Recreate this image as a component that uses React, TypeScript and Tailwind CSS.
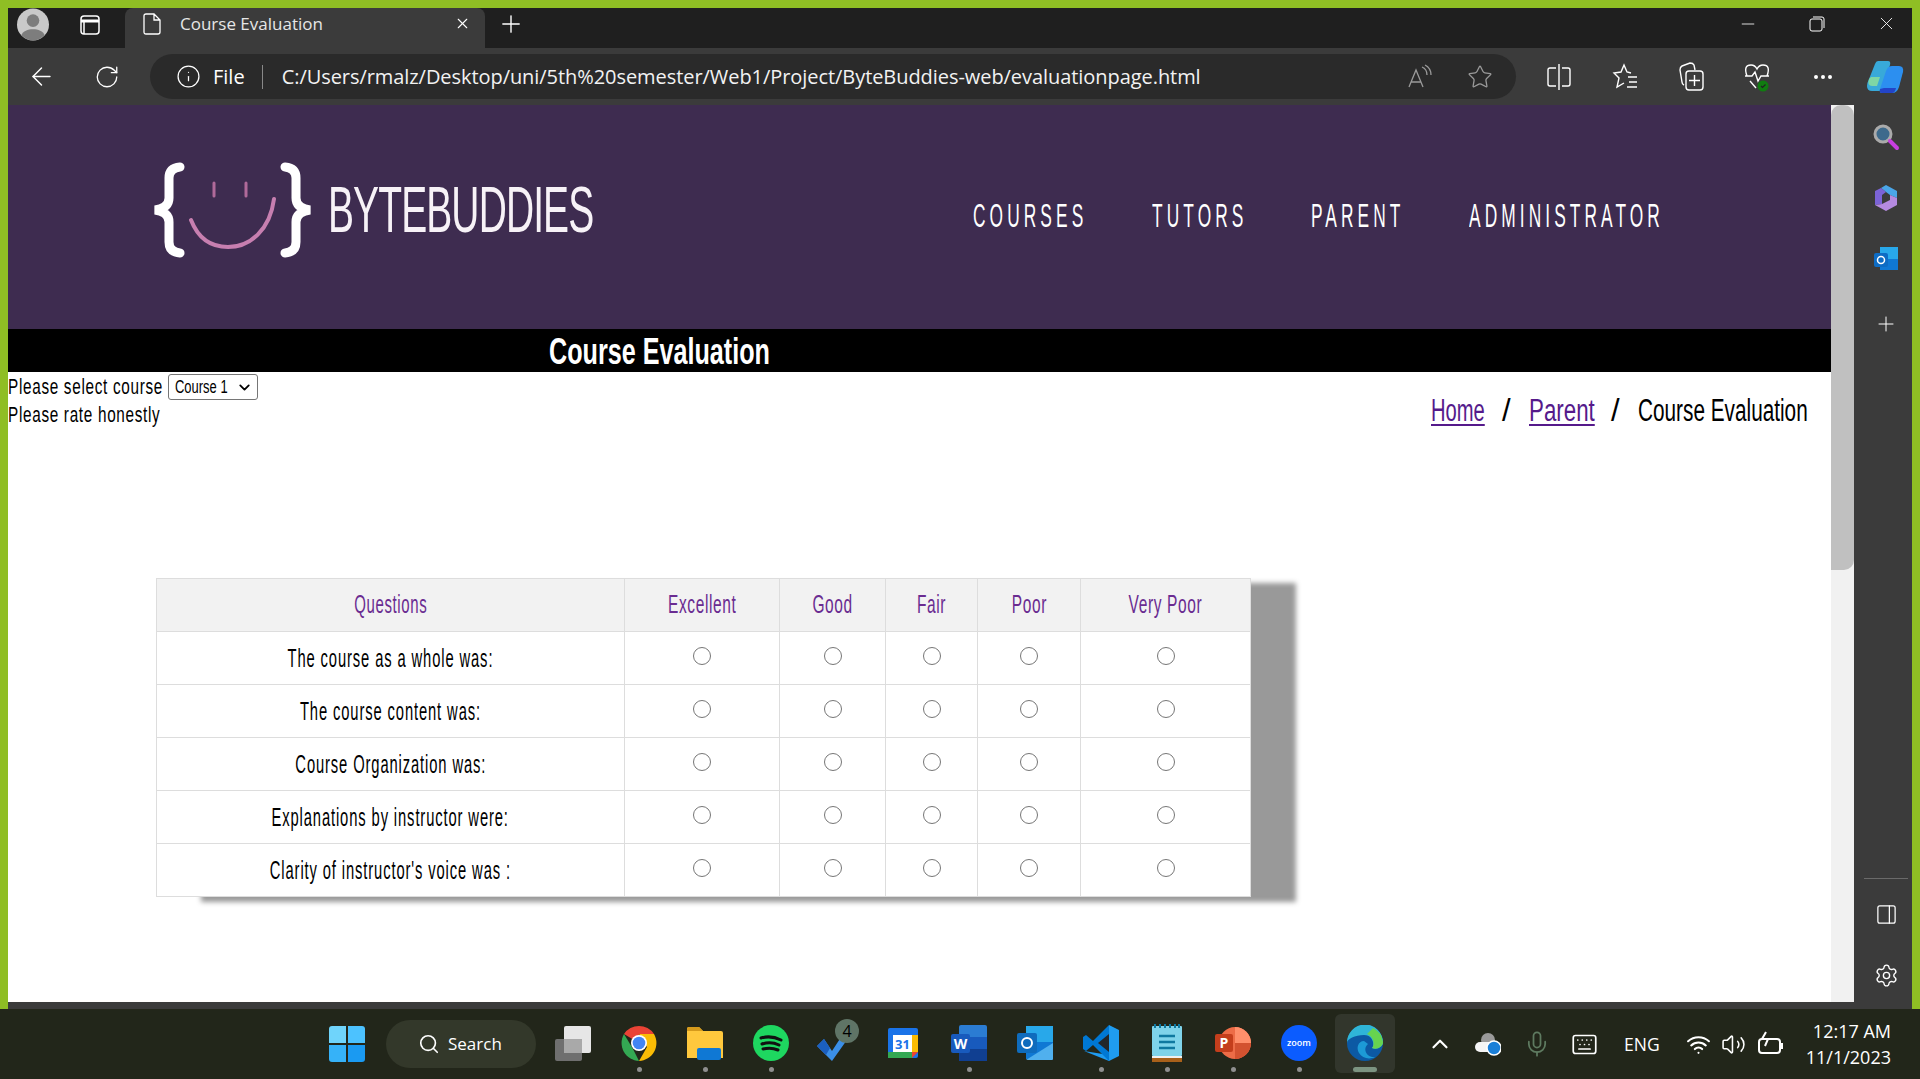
import { ArrowLeft, RotateCw, Info, Star, Plus, Minus, X, MoreHorizontal, Search, ChevronUp, ChevronDown, Mic, Keyboard, Wifi, Volume2, Settings, PanelRight } from "lucide-react";

const questions = [
  "The course as a whole was:",
  "The course content was:",
  "Course Organization was:",
  "Explanations by instructor were:",
  "Clarity of instructor's voice was :",
];
const ratings = ["Excellent", "Good", "Fair", "Poor", "Very Poor"];

// the page's condensed face isn't installed, so the text is squeezed sideways
function Sq({ box, inner, children }: { box: string; inner: string; children: React.ReactNode }) {
  return (
    <span className={"inline-block whitespace-nowrap " + box}>
      <span className={"inline-block origin-left " + inner}>{children}</span>
    </span>
  );
}

function Logo() {
  return (
    <svg className="shrink-0" width="165" height="100" viewBox="0 0 165 100" fill="none" strokeLinecap="round">
      <path d="M30 7Q19 8 19 18V38Q19 48 5 50Q19 52 19 62V82Q19 92 30 93" stroke="#fff" strokeWidth="9" />
      <path d="M135 7Q146 8 146 18V38Q146 48 160 50Q146 52 146 62V82Q146 92 135 93" stroke="#fff" strokeWidth="9" />
      <path d="M64 23V36M96 23V36" stroke="#b06a9a" strokeWidth="3" />
      <path d="M41 60C48 78 60 87 78 87C100 87 120 70 124 39" stroke="#c77fb0" strokeWidth="4" />
    </svg>
  );
}

function TitleBar() {
  return (
    <div className="flex h-[40px] items-start bg-[#1f1f1f] text-white [font-family:'Open_Sans',sans-serif]">
      <div className="flex h-[33px] w-[117px] items-center pl-[8px]">
        <svg width="34" height="33" viewBox="0 0 34 34">
          <circle cx="17" cy="17" r="16.500" fill="#c9c9c9" />
          <circle cx="17" cy="13" r="6.500" fill="#7d7d7d" />
          <path d="M5 28C8 20 26 20 29 28Q23 33.500 17 33.500Q11 33.500 5 28Z" fill="#7d7d7d" />
        </svg>
        <svg className="ml-[29px]" width="22" height="22" viewBox="0 0 22 22" fill="none" stroke="#fff" strokeWidth="1.500">
          <rect x="2" y="2" width="18" height="18" rx="3" />
          <path d="M2 7H20" strokeWidth="3" />
          <path d="M5 7V20" />
        </svg>
      </div>
      <div className="flex h-[40px] w-[360px] items-center rounded-t-lg bg-[#3b3b3b] pb-[9px] pl-[18px] pr-[14px]">
        <svg width="18" height="22" viewBox="0 0 18 22" fill="none" stroke="#fff" strokeWidth="1.300">
          <path d="M3 1H11L17 7V19Q17 21 15 21H3Q1 21 1 19V3Q1 1 3 1ZM11 1V7H17" />
        </svg>
        <span className="ml-[19px] flex-1 text-[17px] text-[#e6e6e6]">Course Evaluation</span>
        <X size={17} strokeWidth={1.500} />
      </div>
      <Plus className="ml-[12px] mt-[2px]" size={28} strokeWidth={1.200} />
      <div className="ml-auto flex h-[31px] items-center gap-[51px] pr-[15px]">
        <Minus size={20} strokeWidth={1} />
        <svg width="16" height="16" viewBox="0 0 16 16" fill="none" stroke="#fff" strokeWidth="1">
          <rect x="1" y="3" width="12" height="12" rx="2" />
          <path d="M4 1H13Q15 1 15 3V12" />
        </svg>
        <X size={21} strokeWidth={1} />
      </div>
    </div>
  );
}

function ToolSlot({ children }: { children: React.ReactNode }) {
  return <div className="flex w-[66px] justify-center">{children}</div>;
}

function ToolBar() {
  return (
    <div className="flex h-[57px] items-center bg-[#3b3b3b] text-white [font-family:'Open_Sans',sans-serif]">
      <ArrowLeft className="ml-[19px]" size={29} strokeWidth={1.200} />
      <RotateCw className="ml-[38px]" size={26} strokeWidth={1.200} />
      <div className="ml-[30px] flex h-[45px] w-[1366px] shrink-0 items-center rounded-full bg-[#2a2a2a] pl-[26px] pr-[23px]">
        <Info size={25} strokeWidth={1.200} />
        <span className="ml-[12px] text-[20px]">File</span>
        <div className="ml-[17px] h-[24px] w-px bg-[#888]" />
        <span className="ml-[19px] text-[20px] tracking-[-0.06px] text-[#f2f2f2]">C:/Users/rmalz/Desktop/uni/5th%20semester/Web1/Project/ByteBuddies-web/evaluationpage.html</span>
        <svg className="ml-auto" width="26" height="26" viewBox="0 0 26 26" fill="none" stroke="#9a9a9a" strokeWidth="1.300">
          <path d="M2 23L9 6L16 23M4.500 18H13.500" />
          <path d="M15 3Q20 5 20 11M18 1Q24 4 24 11" />
        </svg>
        <Star className="ml-[34px]" size={26} strokeWidth={1.200} color="#9a9a9a" />
      </div>
      <div className="ml-[10px] flex items-center">
        <ToolSlot>
          <svg width="24" height="26" viewBox="0 0 24 26" fill="none" stroke="#fff" strokeWidth="1.400">
            <path d="M9 4H3Q1 4 1 6V20Q1 22 3 22H9M15 4H21Q23 4 23 6V20Q23 22 21 22H15M12 0V26" />
          </svg>
        </ToolSlot>
        <ToolSlot>
          <svg width="26" height="28" viewBox="0 0 26 28" fill="none" stroke="#fff" strokeWidth="1.400">
            <path d="M19 10L15 9L12 2L9 9L2 10L7 15L5 24L12 20M16 14H25M17 19H25M15 24H25" />
          </svg>
        </ToolSlot>
        <ToolSlot>
          <svg width="25" height="29" viewBox="0 0 25 29" fill="none" stroke="#fff" strokeWidth="1.400">
            <path d="M5 23Q3 22 3 20L1 8Q1 5 3 4L11 1Q14 1 15 3L16 8" />
            <rect x="7" y="9" width="17" height="19" rx="3" />
            <path d="M15.500 13V24M10 18.500H21" />
          </svg>
        </ToolSlot>
        <ToolSlot>
          <svg width="26" height="30" viewBox="0 0 26 30" fill="none" stroke="#fff" strokeWidth="1.400">
            <path d="M3 14Q-1 3 7 3Q11 3 13 7Q15 3 19 3Q27 3 23 14M1 14H8L11 10L14 19L17 14H25M6 19L12 26" />
            <circle cx="19" cy="24" r="5.500" fill="#107c10" stroke="none" />
            <path d="M17 24L18.500 25.500L21.500 22.500" stroke="#222" strokeWidth="1.200" />
          </svg>
        </ToolSlot>
        <ToolSlot>
          <MoreHorizontal size={24} strokeWidth={2} />
        </ToolSlot>
      </div>
      <svg className="ml-[10px]" width="38" height="36" viewBox="0 0 38 36">
        <path d="M12 2H22Q25 2 24 6L17 29Q16 32 13 32H6Q1 32 1 27Q1 24 3 20L9 5Q10 2 12 2Z" fill="#38a9d9" />
        <path d="M3 20Q1 27 6 27H11L14 18H5Z" fill="#7ed6a5" />
        <path d="M26 7H33Q38 7 37 13L33 28Q31 34 26 34H16Q13 34 14 30L20 12Q22 7 26 7Z" fill="#2c8ff0" />
        <path d="M14 30Q13 34 16 34H26Q29 34 30 29H18Z" fill="#2344c8" />
      </svg>
    </div>
  );
}

function EvalTable() {
  const cols = ["w-[468px]", "w-[155px]", "w-[106px]", "w-[92px]", "w-[103px]", "w-[170px]"];
  return (
    <table className="ml-[148px] w-[1094px] table-fixed border-collapse bg-white shadow-[45px_5px_5px_#999]">
      <colgroup>
        {cols.map((c) => (
          <col key={c} className={c} />
        ))}
      </colgroup>
      <thead>
        <tr className="h-[53px] bg-[#f2f2f2] text-[#6a2c91]">
          <th className="border border-[#ddd] text-center text-[25px] font-normal">
            <span className="inline-block scale-x-[.6] tracking-[1px] whitespace-nowrap">Questions</span>
          </th>
          {ratings.map((r) => (
            <th key={r} className="border border-[#ddd] text-center text-[25px] font-normal">
              <span className="inline-block scale-x-[.62] tracking-[1px] whitespace-nowrap">{r}</span>
            </th>
          ))}
        </tr>
      </thead>
      <tbody>
        {questions.map((q, i) => (
          <tr key={q} className="h-[53px]">
            <td className="border border-[#ddd] pt-[2px] text-center text-[25px] text-black">
              <span className="inline-block scale-x-[.59] tracking-[1.500px] whitespace-nowrap">{q}</span>
            </td>
            {ratings.map((r) => (
              <td key={r} className="border border-[#ddd]">
                <input
                  type="radio"
                  name={"q" + i}
                  className="m-auto block h-[18px] w-[18px] -translate-y-[2px] appearance-none rounded-full border-[1.500px] border-[#767676] bg-white"
                />
              </td>
            ))}
          </tr>
        ))}
      </tbody>
    </table>
  );
}

function Page() {
  return (
    <div className="min-w-0 flex-1 bg-white [font-family:'Liberation_Sans',sans-serif]">
      <header className="flex h-[224px] items-start bg-[#3e2c50] pt-[55px] pl-[142px] pr-[168px]">
        <Logo />
        <Sq box="ml-[13px] mt-[10px] w-[265px] text-[65px] leading-[80px] tracking-[-1.500px] text-[#f7f2f7]" inner="scale-x-[.6]">BYTEBUDDIES</Sq>
        <nav className="ml-auto mt-[31px] flex gap-[67px] text-[34px] leading-[48px] tracking-[8px] text-white">
          <Sq box="w-[112px]" inner="scale-x-[.51]">COURSES</Sq>
          <Sq box="w-[92px]" inner="scale-x-[.51]">TUTORS</Sq>
          <Sq box="w-[91px]" inner="scale-x-[.51]">PARENT</Sq>
          <Sq box="w-[194px]" inner="scale-x-[.51]">ADMINISTRATOR</Sq>
        </nav>
      </header>
      <div className="flex h-[43px] items-center bg-black pl-[541px] pt-[2px]">
        <h1 className="text-[37px] font-bold leading-[41px] text-white">
          <Sq box="w-[220px]" inner="scale-x-[.68]">Course Evaluation</Sq>
        </h1>
      </div>
      <div className="flex items-start justify-between pr-[24px] text-black">
        <div className="text-[22px] leading-[26px] tracking-[1px]">
          <div className="flex h-[30px] items-center">
            <Sq box="w-[155px]" inner="scale-x-[.695]">Please select course</Sq>
            <div className="ml-[5px] flex h-[26px] w-[90px] items-center rounded-[3px] border border-[#767676] bg-white pl-[6px] pr-[4px] text-[18px] tracking-normal">
              <Sq box="w-[60px]" inner="scale-x-[.72]">Course 1</Sq>
              <ChevronDown className="ml-auto" size={17} strokeWidth={2.500} />
            </div>
          </div>
          <p>
            <Sq box="w-[152px]" inner="scale-x-[.695]">Please rate honestly</Sq>
          </p>
        </div>
        <div className="mt-[20px] flex items-center gap-[18px] text-[31px] leading-[38px]">
          <a className="text-[#551a8b]">
            <Sq box="w-[53px]" inner="scale-x-[.65] underline decoration-2 underline-offset-[3px]">Home</Sq>
          </a>
          <span className="w-[9px]">/</span>
          <a className="text-[#551a8b]">
            <Sq box="w-[64px]" inner="scale-x-[.72] underline decoration-2 underline-offset-[3px]">Parent</Sq>
          </a>
          <span className="w-[9px]">/</span>
          <Sq box="w-[169px]" inner="scale-x-[.67]">Course Evaluation</Sq>
        </div>
      </div>
      <div className="mt-[148px]">
        <EvalTable />
      </div>
    </div>
  );
}

function Scrollbar() {
  return (
    <div className="w-[23px] bg-[#f1f1f1]">
      <div className="h-[465px] rounded-[10px] rounded-bl-none bg-[#c0c0c0]" />
    </div>
  );
}

function SideRail() {
  return (
    <aside className="flex w-[58px] flex-col items-center bg-[#3b3b3b] pl-[6px] pt-[18px] pb-[14px] text-white">
      <svg width="28" height="28" viewBox="0 0 28 28" fill="none">
        <circle cx="11" cy="11" r="8" fill="#3d6a8c" stroke="#aaa" strokeWidth="3" />
        <path d="M18 18L25 25" stroke="#c73fe0" strokeWidth="4" strokeLinecap="round" />
      </svg>
      <svg className="mt-[33px]" width="26" height="28" viewBox="0 0 26 28">
        <path d="M13 1L24 7V14L17 11L13 8L8 4Z" fill="#4aa6e8" />
        <path d="M2 7L8 4L13 8L9 11V20L2 21Z" fill="#7b63d6" />
        <path d="M2 21L9 20L17 16V11L24 14V21L13 27Z" fill="#b58ae0" />
      </svg>
      <svg className="mt-[34px]" width="26" height="26" viewBox="0 0 26 26">
        <rect x="7" y="1" width="18" height="12" fill="#28a8ea" />
        <path d="M7 13H25V24H7Z" fill="#0f78d4" />
        <rect x="1" y="7" width="14" height="14" rx="2" fill="#0e6cc4" />
        <circle cx="8" cy="14" r="3.500" fill="none" stroke="#fff" strokeWidth="1.500" />
      </svg>
      <Plus className="mt-[40px]" size={24} strokeWidth={1} />
      <div className="mt-auto h-px w-[44px] bg-[#6a6a6a]" />
      <PanelRight className="mt-[24px]" size={23} strokeWidth={1.300} />
      <Settings className="mt-[37px]" size={25} strokeWidth={1.300} />
    </aside>
  );
}

function Slot({ children, dot, active }: { children: React.ReactNode; dot?: boolean; active?: boolean }) {
  return (
    <div className={"flex h-[59px] flex-col items-center rounded-md pt-[9px] " + (active ? "mx-[3px] w-[60px] bg-[#32362c]" : "w-[66px]")}>
      <div className="flex h-[40px] items-center">{children}</div>
      {dot && <div className={active ? "mt-[4px] h-[5px] w-[24px] rounded-full bg-[#7c9481]" : "mt-[4px] h-[5px] w-[5px] rounded-full bg-[#8f8f8f]"} />}
    </div>
  );
}

function Taskbar() {
  return (
    <footer className="flex h-[70px] items-center bg-[#22261a] text-white [font-family:'Open_Sans',sans-serif]">
      <div className="ml-[329px] grid h-[36px] w-[36px] grid-cols-2 gap-[2px]">
        <div className="rounded-tl-[3px] bg-[#6fd4fb]" />
        <div className="rounded-tr-[3px] bg-[#4cc2ff]" />
        <div className="rounded-bl-[3px] bg-[#36b2f8]" />
        <div className="rounded-br-[3px] bg-[#1a9af2]" />
      </div>
      <div className="ml-[21px] flex h-[48px] w-[150px] items-center rounded-full bg-[#33382a] pl-[32px]">
        <Search size={22} strokeWidth={1.800} />
        <span className="ml-[8px] text-[17px]">Search</span>
      </div>
      <div className="ml-[4px] mt-[5px] flex self-start">
        <Slot>
          <svg width="36" height="36" viewBox="0 0 36 36">
            <rect x="9" y="1" width="27" height="27" rx="2" fill="#e6e6e6" />
            <rect x="0" y="14" width="27" height="22" rx="2" fill="#6f6f6f" />
            <rect x="9" y="14" width="18" height="14" fill="#a9a9a9" />
          </svg>
        </Slot>
        <Slot dot>
          <svg width="36" height="36" viewBox="0 0 36 36">
            <path d="M18 18L3 9A18 18 0 0 1 33 9H18Z" fill="#ea4335" />
            <path d="M18 36A18 18 0 0 1 3 9L12 24Z" fill="#34a853" />
            <path d="M33 9A18 18 0 0 1 18 36L26 22L18 9Z" fill="#fbbc05" />
            <circle cx="18" cy="18" r="8" fill="#fff" />
            <circle cx="18" cy="18" r="6.300" fill="#4285f4" />
          </svg>
        </Slot>
        <Slot dot>
          <svg width="36" height="34" viewBox="0 0 36 34">
            <path d="M0 3Q0 1 2 1H12L16 5H34Q36 5 36 7V32H0Z" fill="#ffc83d" />
            <path d="M0 3Q0 1 2 1H12L16 5H0Z" fill="#d59a1c" />
            <rect x="10" y="22" width="24" height="12" rx="2" fill="#0f78d4" />
          </svg>
        </Slot>
        <Slot dot>
          <svg width="36" height="36" viewBox="0 0 36 36" fill="none">
            <circle cx="18" cy="18" r="18" fill="#1ed760" />
            <path d="M8 13Q18 10 28 15M9 19Q18 16 26 20M10 24Q18 22 25 25" stroke="#111" strokeWidth="3" strokeLinecap="round" />
          </svg>
        </Slot>
        <Slot>
          <div className="relative h-[36px] w-[40px]">
            <svg width="32" height="30" viewBox="0 0 32 30" className="absolute left-0 top-[6px]">
              <path d="M0 15L7 8L15 20L28 0L32 6L15 30Z" fill="#3b8fe8" />
              <path d="M0 15L7 8L13 17L9 24Z" fill="#1b5fc0" />
            </svg>
            <span className="absolute -top-[6px] right-[-2px] flex h-[24px] w-[24px] items-center justify-center rounded-full bg-[#5f7466] text-[16px] text-black">4</span>
          </div>
        </Slot>
        <Slot>
          <svg width="30" height="30" viewBox="0 0 30 30">
            <rect width="30" height="30" rx="2" fill="#1a73e8" />
            <rect x="5" y="7" width="19" height="17" fill="#fff" />
            <rect x="24" y="7" width="6" height="17" fill="#fbbc04" />
            <rect y="24" width="24" height="6" fill="#34a853" />
            <path d="M24 24H30L24 30Z" fill="#ea4335" />
            <text x="14.500" y="21" fontSize="13" fontWeight="700" textAnchor="middle" fill="#1a73e8">31</text>
          </svg>
        </Slot>
        <Slot dot>
          <svg width="36" height="36" viewBox="0 0 36 36">
            <rect x="8" y="0" width="28" height="36" rx="2" fill="#2b7cd3" />
            <rect x="8" y="12" width="28" height="12" fill="#185abd" />
            <rect x="8" y="24" width="28" height="12" fill="#103f91" />
            <rect y="9" width="19" height="19" rx="2" fill="#185abd" />
            <text x="9.500" y="24" fontSize="14" fontWeight="700" textAnchor="middle" fill="#fff">W</text>
          </svg>
        </Slot>
        <Slot>
          <svg width="36" height="36" viewBox="0 0 36 36">
            <rect x="9" y="1" width="27" height="18" fill="#28a8ea" />
            <path d="M9 17L36 17V34H9Z" fill="#0f78d4" />
            <path d="M9 35L36 18V34Q36 35 35 35Z" fill="#50b0ee" />
            <rect y="8" width="20" height="20" rx="2" fill="#0f6cbd" />
            <circle cx="10" cy="18" r="5" fill="none" stroke="#fff" strokeWidth="2" />
          </svg>
        </Slot>
        <Slot dot>
          <svg width="36" height="38" viewBox="0 0 36 38">
            <path d="M26 1L36 6V32L26 37L1 27L26 31Z" fill="#1f9cf0" />
            <path d="M26 1L10 17L3 11L0 13V25L3 27L10 21L26 37Z" fill="#0078d4" />
            <path d="M26 10L15 19L26 28Z" fill="#22262a" />
          </svg>
        </Slot>
        <Slot dot>
          <svg width="30" height="38" viewBox="0 0 30 38">
            <rect y="2" width="30" height="30" rx="1" fill="#7fd3ea" />
            <rect y="32" width="30" height="3" fill="#f0f0f0" />
            <rect y="34" width="30" height="4" fill="#a8601a" />
            <path d="M7 12H23M7 18H23M7 24H23" stroke="#0f78a0" strokeWidth="2.500" />
            <path d="M3 0V4M8 0V4M13 0V4M18 0V4M23 0V4M27 0V4" stroke="#0f78a0" strokeWidth="2" />
          </svg>
        </Slot>
        <Slot dot>
          <svg width="36" height="36" viewBox="0 0 36 36">
            <circle cx="20" cy="18" r="16" fill="#ed6c47" />
            <path d="M20 2A16 16 0 0 1 36 18H20Z" fill="#ff8f6b" />
            <path d="M20 18H36A16 16 0 0 1 20 34Z" fill="#d35230" />
            <rect y="9" width="18" height="18" rx="2" fill="#c43e1c" />
            <text x="9" y="23" fontSize="14" fontWeight="700" textAnchor="middle" fill="#fff">P</text>
          </svg>
        </Slot>
        <Slot dot>
          <div className="flex h-[36px] w-[36px] items-center justify-center rounded-full bg-[#0b5cff] text-[9px] font-semibold text-white">zoom</div>
        </Slot>
        <Slot dot active>
          <svg width="36" height="36" viewBox="0 0 36 36" fill="none">
            <circle cx="18" cy="18" r="18" fill="#0c59a4" />
            <path d="M0 18A18 18 0 0 1 36 17C36 22 30 25 25 23C28 20 26 10 17 10C8 10 0 14 0 18Z" fill="#2fb5d8" />
            <path d="M26 3A18 18 0 0 1 36 17C36 22 30 25 25 23C28 20 27 12 20 9Z" fill="#67d44f" />
            <path d="M17 16C11 16 9 23 12 28C15 33 22 35 28 32C20 33 15 24 21 19Z" fill="#1c9ad6" />
          </svg>
        </Slot>
      </div>
      <ChevronUp className="ml-[29px]" size={26} strokeWidth={2} />
      <svg className="ml-[22px]" width="26" height="24" viewBox="0 0 26 24">
        <circle cx="13" cy="8" r="7" fill="#9a9a9a" />
        <rect x="0" y="10" width="20" height="10" rx="5" fill="#f5f5f5" />
        <circle cx="19" cy="16" r="7" fill="#1a7fd8" stroke="#fff" strokeWidth="1.500" />
      </svg>
      <Mic className="ml-[22px]" size={28} strokeWidth={1.500} color="#5e7a60" />
      <Keyboard className="ml-[20px]" size={27} strokeWidth={1.500} />
      <span className="ml-[26px] text-[17.500px]">ENG</span>
      <Wifi className="ml-[26px]" size={25} strokeWidth={2} />
      <Volume2 className="ml-[10px]" size={25} strokeWidth={1.500} />
      <svg className="ml-[11px]" width="27" height="26" viewBox="0 0 27 26" fill="none" stroke="#fff" strokeWidth="2">
        <rect x="2" y="8" width="21" height="14" rx="3" />
        <path d="M25 12V18" />
        <path d="M9 1L5 8H11L8 15" fill="#22261a" />
      </svg>
      <div className="ml-auto pr-[29px] text-right text-[18px] leading-[26px]">
        <div>12:17 AM</div>
        <div>11/1/2023</div>
      </div>
    </footer>
  );
}

export default function App() {
  return (
    <div className="flex h-[1079px] w-[1920px] flex-col overflow-hidden bg-[#8fbe24]">
      <div className="flex min-h-0 flex-1 flex-col pt-[8px] pl-[8px] pr-[8px]">
        <TitleBar />
        <ToolBar />
        <div className="flex min-h-0 flex-1">
          <Page />
          <Scrollbar />
          <SideRail />
        </div>
        <div className="h-[7px] bg-[#3b3b3b]" />
      </div>
      <Taskbar />
    </div>
  );
}
